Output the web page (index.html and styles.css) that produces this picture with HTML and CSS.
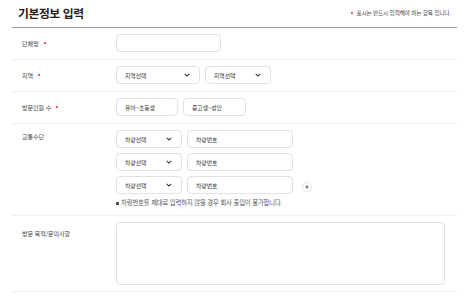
FILE: index.html
```html
<!DOCTYPE html>
<html lang="ko">
<head>
<meta charset="utf-8">
<link rel="stylesheet" href="styles.css">
</head>
<body>
<div class="form">
  <div class="head">
    <h2 class="title">기본정보 입력</h2>
    <p class="req-note"><span class="dot"></span>표시는 반드시 입력해야 하는 항목 입니다.</p>
  </div>

  <div class="row">
    <div class="label">단체명<span class="dot"></span></div>
    <div class="fields">
      <div class="field w105"></div>
    </div>
  </div>

  <div class="row">
    <div class="label">지역<span class="dot"></span></div>
    <div class="fields">
      <div class="line">
        <div class="field select w84">지역선택<svg class="chev" viewBox="0 0 8 5"><path d="M1 1l3 3 3-3"/></svg></div>
        <div class="field select w66">지역선택<svg class="chev" viewBox="0 0 8 5"><path d="M1 1l3 3 3-3"/></svg></div>
      </div>
    </div>
  </div>

  <div class="row">
    <div class="label">방문인원 수<span class="dot"></span></div>
    <div class="fields">
      <div class="line">
        <div class="field w62">유아~초등생</div>
        <div class="field w63">중고생~성인</div>
      </div>
    </div>
  </div>

  <div class="row">
    <div class="label top">교통수단</div>
    <div class="fields">
      <div class="stack">
        <div class="line">
          <div class="field select w66">차량선택<svg class="chev" viewBox="0 0 8 5"><path d="M1 1l3 3 3-3"/></svg></div>
          <div class="field w106">차량번호</div>
        </div>
        <div class="line">
          <div class="field select w66">차량선택<svg class="chev" viewBox="0 0 8 5"><path d="M1 1l3 3 3-3"/></svg></div>
          <div class="field w106">차량번호</div>
        </div>
        <div class="line">
          <div class="field select w66">차량선택<svg class="chev" viewBox="0 0 8 5"><path d="M1 1l3 3 3-3"/></svg></div>
          <div class="field w106">차량번호</div>
          <span class="add"><svg viewBox="0 0 10 10"><path d="M5 3v4M3 5h4"/></svg></span>
        </div>
      </div>
      <p class="hint"><span class="sq"></span>차량번호를 제대로 입력하지 않을 경우 회사 출입이 불가합니다.</p>
    </div>
  </div>

  <div class="row last">
    <div class="label tall">방문 목적/문의사항</div>
    <div class="fields">
      <div class="area"></div>
    </div>
  </div>
</div>
</body>
</html>
```

FILE: styles.css
```css
* { box-sizing: border-box; }
body {
  margin: 0;
  background: #fff;
  font-family: "Noto Sans CJK KR", "Noto Sans", sans-serif;
  color: #333;
}
.form {
  width: 445px;
  margin-left: 12px;
}
.head {
  height: 28px;
  display: flex;
  align-items: center;
  justify-content: space-between;
  border-bottom: 1px solid #9a9a9a;
  padding: 0 6px 1px 6px;
}
.title {
  margin: 0;
  font-size: 11.8px;
  font-weight: 700;
  letter-spacing: -0.4px;
  color: #222;
  line-height: 14px;
}
.req-note {
  margin: 0;
  font-size: 5.6px;
  color: #444;
  display: flex;
  align-items: center;
  gap: 3px;
  letter-spacing: -0.1px;
}
.dot {
  display: inline-block;
  width: 2px;
  height: 2px;
  background: #e8202a;
  border-radius: 50%;
}
.row {
  display: flex;
  border-bottom: 1px solid #f0f0f0;
  padding: 6px 0 7px;
}
.row.last { padding-bottom: 6px; }
.label {
  width: 104px;
  flex: none;
  padding-left: 10px;
  font-size: 6.1px;
  color: #444;
  display: flex;
  align-items: center;
  gap: 5px;
  letter-spacing: -0.1px;
}
.label.top { align-items: flex-start; padding-top: 2px; }
.label.tall { align-items: flex-start; padding-top: 7px; }
.fields { display: flex; flex-direction: column; }
.line { display: flex; flex-direction: row; gap: 5px; align-items: center; }
.stack { display: flex; flex-direction: column; gap: 5px; }
.field {
  height: 18px;
  border: 1px solid #e1e1e1;
  border-radius: 4px;
  display: flex;
  align-items: center;
  padding-left: 8px;
  font-size: 5.8px;
  color: #333;
  background: #fff;
}
.select { justify-content: space-between; padding-right: 9px; }
.chev {
  width: 6px;
  height: 4px;
  fill: none;
  stroke: #333;
  stroke-width: 1.4;
}
.w62 { width: 62px; }
.w63 { width: 63px; }
.w66 { width: 66px; }
.w84 { width: 84px; }
.w105 { width: 105px; }
.w106 { width: 106px; }
.add {
  width: 10px;
  height: 10px;
  border: 1px solid #e6e6e6;
  border-radius: 50%;
  margin-left: 4px;
  margin-top: 3px;
  display: flex;
}
.add svg {
  width: 8px;
  height: 8px;
  fill: none;
  stroke: #333;
  stroke-width: 1;
}
.hint {
  margin: 5px 0 1px;
  font-size: 6.3px;
  line-height: 8px;
  color: #555;
  letter-spacing: -0.1px;
  display: flex;
  align-items: center;
  gap: 2px;
}
.sq {
  width: 3px;
  height: 3px;
  background: #555;
}
.area {
  width: 329px;
  height: 63px;
  border: 1px solid #e1e1e1;
  border-radius: 4px;
}
```
